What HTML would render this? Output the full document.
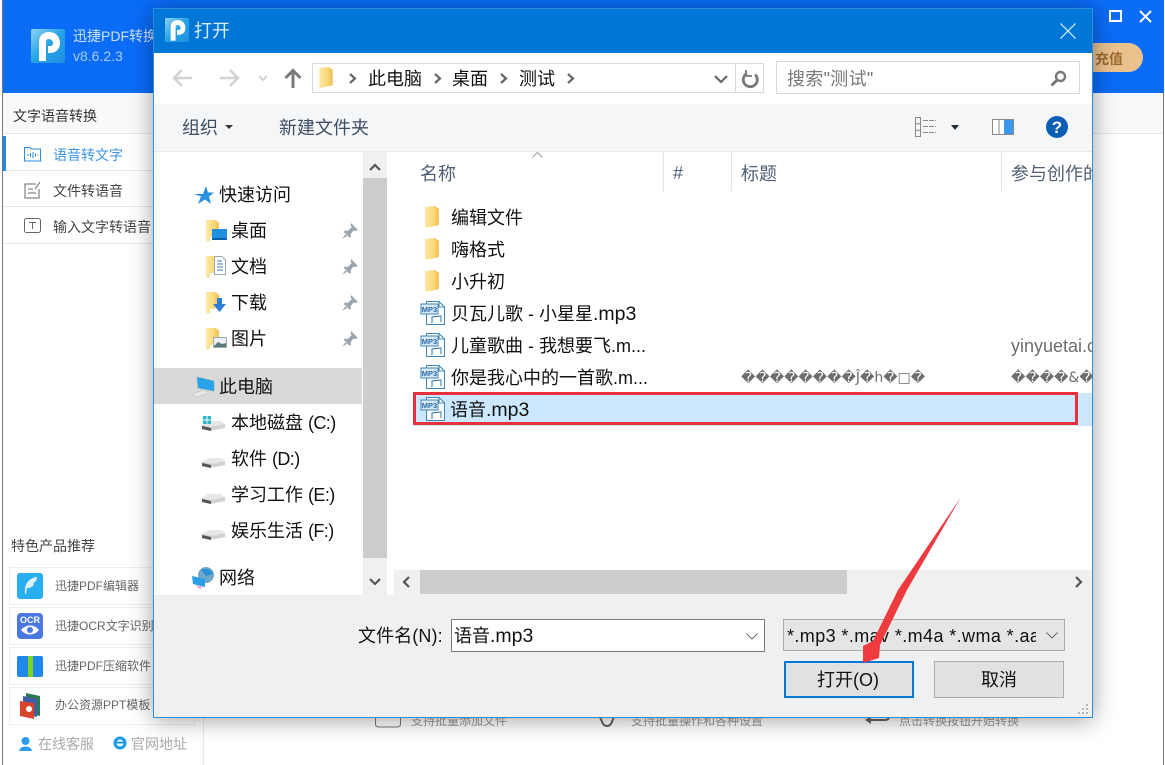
<!DOCTYPE html>
<html lang="zh"><head><meta charset="utf-8"><title>打开</title>
<style>
html,body{margin:0;padding:0;background:#fff}
body{width:1165px;height:765px;position:relative;overflow:hidden;font-family:"Liberation Sans","Noto Sans CJK SC",sans-serif;color:#111}
.a{position:absolute;box-sizing:border-box}
.t{position:absolute;white-space:nowrap;line-height:24px;height:24px;font-size:18px;margin-top:1px}
.s{font-size:14px;color:#444;margin-top:0}
.c{font-size:12px;color:#666;margin-top:0}
.g{font-size:12px;color:#999;margin-top:0}
.m{font-size:19.5px}
.p{letter-spacing:-.6px}
svg{position:absolute;overflow:visible}
</style></head><body>
<svg width="0" height="0" style="position:absolute"><defs>
<linearGradient id="fg" x1="0" x2="1"><stop offset="0" stop-color="#fde9a8"/><stop offset=".6" stop-color="#fbd977"/><stop offset="1" stop-color="#eebf55"/></linearGradient>
<linearGradient id="lg" x1="0" y1="0" x2="1" y2="1"><stop offset="0" stop-color="#8fd2ee"/><stop offset=".5" stop-color="#24a4e8"/><stop offset="1" stop-color="#1f8fe0"/></linearGradient>
<symbol id="folder" viewBox="0 0 14 22"><path d="M0 1 L10 0 L14 3 V19 L1 22 L0 21Z" fill="url(#fg)"/><path d="M11 1 L14 3 V19 L11 20Z" fill="#f3c862"/></symbol>
<symbol id="qf" viewBox="0 0 14 22"><path d="M0 0 H10 L13 3 V16 L4 17 V21 L1 22 L0 21Z" fill="url(#fg)"/></symbol>
<symbol id="drive" viewBox="0 0 24 16"><path d="M0 9 L7 5 H18 L23 8 V12 L8 15 L0 13Z" fill="#cfd1d3"/><path d="M0 9 L9 11 L23 8 L18 5 H7Z" fill="#e6e7e8"/><path d="M0 10 L9 12 V15 L0 13Z" fill="#555"/></symbol>
<symbol id="pin" viewBox="0 0 16 16"><path d="M9 1 L15 7 L13 8 L11 7.500 L8.500 11 L9 13 L7.500 14 L2.500 9 L3.500 7.500 L6 8 L9.500 4.500 L8.500 3Z M4.500 10 L1 15 L6 12Z" fill="#9aa5ad"/></symbol>
</defs></svg>

<!-- background app -->
<div class="a" style="left:2px;top:0;width:1162px;height:93px;background:#0a6cf7"></div>
<div class="a" style="left:2px;top:0;width:1px;height:765px;background:#777"></div>
<div class="a" style="left:1163px;top:93px;width:1px;height:672px;background:#777"></div>
<div class="a" style="left:3px;top:93px;width:1160px;height:41px;background:#f8f9fb;border-bottom:1px solid #e8e8e8"></div>
<div class="a" style="left:3px;top:170px;width:150px;height:1px;background:#e8e8e8"></div>
<div class="a" style="left:3px;top:206px;width:150px;height:1px;background:#e8e8e8"></div>
<div class="a" style="left:3px;top:243px;width:150px;height:1px;background:#e8e8e8"></div>
<div class="a" style="left:3px;top:136px;width:3px;height:35px;background:#1e88e5"></div>
<div class="a" style="left:203px;top:717px;width:1px;height:48px;background:#e8e8e8"></div>

<svg style="left:31px;top:29px" width="34" height="34" viewBox="0 0 34 34"><rect width="34" height="34" rx="2" fill="url(#lg)"/><path d="M8 32 V13 C8 6 13 3 18 3 C25 3 29 8 29 14 C29 20 25 24 19 24 H17 V17 H19 C21 17 22 16 22 14 C22 12 20 10 18 10 C16 10 15 11 15 13 V32Z" fill="#fff"/></svg>
<div class="t s" style="left:73px;top:24px;color:#cfe3ff">迅捷PDF转换器</div>
<div class="t s" style="left:73px;top:44px;color:#a9cdf8">v8.6.2.3</div>
<div class="t s" style="left:13px;top:104px;color:#333">文字语音转换</div>
<svg style="left:24px;top:146px" width="17" height="16" viewBox="0 0 17 16" fill="none" stroke="#2a8fe0"><path d="M.5 1.500H6L7 3H16.500V15H.5Z"/><path d="M4 8V10M6.500 7V11M9 6V12M11.500 7.500V10.500M14 8.500V9.500"/></svg>
<div class="t s" style="left:53px;top:143px;color:#3b96e6">语音转文字</div>
<svg style="left:24px;top:181px" width="18" height="18" viewBox="0 0 18 18" fill="none" stroke="#666"><path d="M12 3H1V17H15V8M4 8H9M4 12H12M11 8L16 1"/></svg>
<div class="t s" style="left:53px;top:179px">文件转语音</div>
<svg style="left:24px;top:218px" width="17" height="15" viewBox="0 0 17 15" fill="none" stroke="#666"><rect x=".5" y=".5" width="16" height="14" rx="2"/><path d="M5 4.500H12M8.500 4.500V11"/></svg>
<div class="t s" style="left:53px;top:215px">输入文字转语音</div>
<div class="t s" style="left:11px;top:534px">特色产品推荐</div>

<div class="a" style="left:9px;top:567px;width:186px;height:38px;border:1px solid #eee"></div>
<div class="a" style="left:9px;top:607px;width:186px;height:38px;border:1px solid #eee"></div>
<div class="a" style="left:9px;top:647px;width:186px;height:38px;border:1px solid #eee"></div>
<div class="a" style="left:9px;top:687px;width:186px;height:38px;border:1px solid #eee"></div>
<svg style="left:17px;top:573px" width="26" height="26" viewBox="0 0 26 26"><rect width="26" height="26" rx="3" fill="#29aef0"/><path d="M8 21C7 12 11 5 20 4C20 8 18 9 16 10L17 11C15 15 12 15 10 15L9 21Z" fill="#dff3fd"/></svg>
<svg style="left:17px;top:613px" width="26" height="26" viewBox="0 0 26 26"><rect width="26" height="26" rx="4" fill="#4a78e0"/><text x="13" y="10" font-size="9" font-weight="700" text-anchor="middle" fill="#fff" font-family="Liberation Sans">OCR</text><path d="M4 17C9 11 17 11 22 17C17 23 9 23 4 17Z" fill="#fff"/><circle cx="13" cy="17" r="3" fill="#4a78e0"/></svg>
<svg style="left:17px;top:656px" width="26" height="21" viewBox="0 0 26 21"><rect width="26" height="21" rx="2" fill="#1f88ea"/><rect x="11" width="5" height="21" fill="#7ed321"/></svg>
<svg style="left:20px;top:693px" width="20" height="26" viewBox="0 0 20 26"><path d="M6 0L20 3V23L6 20Z" fill="#2c7a52"/><path d="M3 3L17 6V24L3 21Z" fill="#3f5ea8"/><path d="M0 8L14 10V26L0 23Z" fill="#d8452b"/><circle cx="9" cy="16" r="3" fill="#fff"/></svg>
<div class="t c" style="left:55px;top:574px">迅捷PDF编辑器</div>
<div class="t c" style="left:55px;top:614px">迅捷OCR文字识别</div>
<div class="t c" style="left:55px;top:654px">迅捷PDF压缩软件</div>
<div class="t c" style="left:55px;top:693px">办公资源PPT模板</div>
<svg style="left:18px;top:736px" width="15" height="15" viewBox="0 0 15 15"><circle cx="7.500" cy="5" r="4" fill="#2a9df0"/><path d="M1 15C2 9 13 9 14 15Z" fill="#2a9df0"/></svg>
<div class="t" style="left:38px;top:731px;font-size:14px;color:#aaa">在线客服</div>
<svg style="left:113px;top:736px" width="14" height="14" viewBox="0 0 14 14"><circle cx="7" cy="7" r="5" fill="none" stroke="#1e9be8" stroke-width="3"/><path d="M3 6.500H12" stroke="#1e9be8" stroke-width="2"/></svg>
<div class="t" style="left:131px;top:731px;font-size:14px;color:#aaa">官网地址</div>

<div class="t g" style="left:411px;top:709px">支持批量添加文件</div>
<div class="t g" style="left:631px;top:709px">支持批量操作和各种设置</div>
<div class="t g" style="left:899px;top:709px">点击转换按钮开始转换</div>
<svg style="left:375px;top:712px" width="26" height="16" viewBox="0 0 26 16" fill="none" stroke="#777"><rect x=".5" y="-6" width="25" height="21" rx="3"/></svg>
<svg style="left:593px;top:712px" width="28" height="16" viewBox="0 0 28 16" fill="none" stroke="#666" stroke-width="2"><path d="M0 5H6C9 5 8 14 14 14C20 14 19 5 22 5H28"/></svg>
<svg style="left:865px;top:712px" width="27" height="14" viewBox="0 0 27 14" fill="none" stroke="#666" stroke-width="2"><path d="M25 0C25 6 23 8 20 8H4"/><path d="M0 8L6 4V12Z" fill="#666" stroke="none"/></svg>

<div class="a" style="left:1093px;top:43px;width:50px;height:29px;background:#eac28e;border-radius:0 15px 15px 0"></div>
<div class="t" style="left:1095px;top:46px;font-size:14px;font-weight:700;color:#9c6a2e">充值</div>
<div class="a" style="left:1109px;top:10px;width:13px;height:12px;border:2px solid #fff"></div>
<svg style="left:1139px;top:10px" width="13" height="13" viewBox="0 0 13 13" stroke="#fff" stroke-width="2"><path d="M1 1L12 12M12 1L1 12"/></svg>

<!-- dialog -->
<div class="a" style="left:153px;top:8px;width:940px;height:710px;background:#fff;border:1px solid #2a8fe0;box-shadow:0 2px 22px rgba(0,0,0,.38);overflow:hidden"></div>
<div class="a" style="left:154px;top:9px;width:938px;height:44px;background:#0076d6"></div>
<svg style="left:165px;top:18px" width="24" height="24" viewBox="0 0 34 34"><rect width="34" height="34" rx="2" fill="url(#lg)"/><path d="M8 32 V13 C8 6 13 3 18 3 C25 3 29 8 29 14 C29 20 25 24 19 24 H17 V17 H19 C21 17 22 16 22 14 C22 12 20 10 18 10 C16 10 15 11 15 13 V32Z" fill="#fff"/></svg>
<div class="t" style="left:194px;top:18px;color:#dcecfa">打开</div>
<svg style="left:1060px;top:23px" width="16" height="16" viewBox="0 0 16 16" stroke="#e8f3fc" stroke-width="1.200"><path d="M.5 .5L15.500 15.500M15.500 .5L.5 15.500"/></svg>

<!-- nav toolbar -->
<svg style="left:172px;top:68px" width="22" height="20" viewBox="0 0 22 20" fill="none" stroke="#d2d2d2" stroke-width="2.500"><path d="M20 10H2M10 2L2 10L10 18"/></svg>
<svg style="left:218px;top:68px" width="22" height="20" viewBox="0 0 22 20" fill="none" stroke="#d2d2d2" stroke-width="2.500"><path d="M2 10H20M12 2L20 10L12 18"/></svg>
<svg style="left:258px;top:75px" width="10" height="6" viewBox="0 0 10 6" fill="none" stroke="#d5d5d5" stroke-width="2"><path d="M1 1L5 5L9 1"/></svg>
<svg style="left:284px;top:68px" width="18" height="20" viewBox="0 0 18 20" fill="none" stroke="#7a7a7a" stroke-width="3"><path d="M9 20V3M1.500 10L9 2.500L16.500 10"/></svg>
<div class="a" style="left:312px;top:63px;width:452px;height:30px;border:1px solid #d9d9d9"></div>
<div class="a" style="left:735px;top:63px;width:1px;height:30px;background:#d9d9d9"></div>
<svg style="left:319px;top:67px" width="14" height="21"><use href="#folder" width="14" height="21"/></svg>
<svg style="left:349px;top:73px" width="7" height="11" viewBox="0 0 7 11" fill="none" stroke="#666" stroke-width="2.200"><path d="M1 1L6 5.500L1 10"/></svg>
<div class="t" style="left:368px;top:66px">此电脑</div>
<svg style="left:434px;top:73px" width="7" height="11" viewBox="0 0 7 11" fill="none" stroke="#666" stroke-width="2.200"><path d="M1 1L6 5.500L1 10"/></svg>
<div class="t" style="left:452px;top:66px">桌面</div>
<svg style="left:500px;top:73px" width="7" height="11" viewBox="0 0 7 11" fill="none" stroke="#666" stroke-width="2.200"><path d="M1 1L6 5.500L1 10"/></svg>
<div class="t" style="left:519px;top:66px">测试</div>
<svg style="left:567px;top:73px" width="7" height="11" viewBox="0 0 7 11" fill="none" stroke="#666" stroke-width="2.200"><path d="M1 1L6 5.500L1 10"/></svg>
<svg style="left:714px;top:75px" width="14" height="9" viewBox="0 0 14 9" fill="none" stroke="#666" stroke-width="2.200"><path d="M1 1L7 7L13 1"/></svg>
<svg style="left:742px;top:70px" width="17" height="18" viewBox="0 0 17 18" fill="none" stroke="#7a7a7a" stroke-width="2.800"><path d="M5 3.500A7 7 0 1 0 13 4.500"/><path d="M4 0V6H10" stroke-width="1.800"/></svg>
<div class="a" style="left:776px;top:61px;width:304px;height:33px;border:1px solid #d9d9d9"></div>
<div class="t" style="left:787px;top:66px;color:#777;letter-spacing:.3px">搜索"测试"</div>
<svg style="left:1050px;top:70px" width="17" height="17" viewBox="0 0 17 17" fill="none" stroke="#777"><circle cx="10.500" cy="6.500" r="4.500" stroke-width="2.400"/><path d="M7 10L1.500 15.500" stroke-width="3"/></svg>

<!-- command bar -->
<div class="a" style="left:154px;top:104px;width:938px;height:48px;background:#f5f6f7;border-bottom:1px solid #e8e9ea"></div>
<div class="t" style="left:182px;top:115px;color:#3d4f64">组织</div>
<svg style="left:225px;top:125px" width="8" height="4" viewBox="0 0 8 4"><path d="M0 0H8L4 4Z" fill="#333"/></svg>
<div class="t" style="left:279px;top:115px;color:#3d4f64">新建文件夹</div>
<svg style="left:915px;top:117px" width="22" height="20" viewBox="0 0 22 20" fill="none" stroke="#8a8a8a"><rect x=".5" y=".5" width="5" height="19"/><path d="M.5 6.800H5.500M.5 13.200H5.500"/><path d="M8 3.500H21M8 9.500H21M8 15.500H21" stroke-dasharray="5 1"/></svg>
<svg style="left:951px;top:125px" width="8" height="5" viewBox="0 0 8 5"><path d="M0 0H8L4 5Z" fill="#1f2d3d"/></svg>
<svg style="left:992px;top:119px" width="22" height="16" viewBox="0 0 22 16"><rect x=".5" y=".5" width="21" height="15" fill="#fff" stroke="#8a8a8a"/><rect x="12" y="1" width="9" height="14" fill="#3a98ec"/><path d="M7 1V15" stroke="#8a8a8a"/></svg>
<svg style="left:1046px;top:116px" width="22" height="22" viewBox="0 0 22 22"><circle cx="11" cy="11" r="11" fill="#0a5fb4"/><text x="11" y="17" font-size="17" font-weight="700" text-anchor="middle" fill="#fff" font-family="Liberation Sans">?</text></svg>

<!-- left nav -->
<div class="a" style="left:154px;top:368px;width:208px;height:36px;background:#d9d9d9"></div>
<svg style="left:194px;top:186px" width="20" height="19" viewBox="0 0 20 19"><path d="M12 0L14 6.500H20L15 10.500L17 18L11 13.500L4 18L7 10.500L0 8H9Z" fill="#2b90e0"/></svg>
<div class="t" style="left:219px;top:182px">快速访问</div>
<svg style="left:206px;top:220px" width="14" height="22"><use href="#qf" width="14" height="22"/></svg>
<svg style="left:212px;top:229px" width="15" height="11" viewBox="0 0 15 11"><rect width="15" height="11" fill="#1f8fe0"/><rect y="9" width="15" height="2" fill="#0c5ea8"/></svg>
<div class="t" style="left:231px;top:218px">桌面</div>
<svg style="left:206px;top:256px" width="14" height="22"><use href="#qf" width="14" height="22"/></svg>
<svg style="left:214px;top:256px" width="12" height="19" viewBox="0 0 12 19" fill="#fff" stroke="#9aa"><path d="M.5 .5H8L11.500 4V18.500H.5Z"/><path d="M3 5H8M3 8H9M3 11H9M3 14H9" stroke="#3b7fbd"/></svg>
<div class="t" style="left:231px;top:254px">文档</div>
<svg style="left:206px;top:292px" width="14" height="22"><use href="#qf" width="14" height="22"/></svg>
<svg style="left:213px;top:298px" width="13" height="14" viewBox="0 0 13 14"><path d="M4 0H9V6H13L6.500 14L0 6H4Z" fill="#2c7fd6"/></svg>
<div class="t" style="left:231px;top:290px">下载</div>
<svg style="left:206px;top:328px" width="14" height="22"><use href="#qf" width="14" height="22"/></svg>
<svg style="left:213px;top:337px" width="14" height="11" viewBox="0 0 14 11"><rect x=".5" y=".5" width="13" height="10" fill="#eef" stroke="#9aa"/><path d="M1 9L5 5L9 7L13 6V10H1Z" fill="#5b7a7a"/></svg>
<div class="t" style="left:231px;top:326px">图片</div>
<svg style="left:341px;top:222px" width="18" height="18"><use href="#pin" width="18" height="18"/></svg>
<svg style="left:341px;top:258px" width="18" height="18"><use href="#pin" width="18" height="18"/></svg>
<svg style="left:341px;top:294px" width="18" height="18"><use href="#pin" width="18" height="18"/></svg>
<svg style="left:341px;top:330px" width="18" height="18"><use href="#pin" width="18" height="18"/></svg>
<svg style="left:191px;top:376px" width="24" height="21" viewBox="0 0 24 21"><path d="M6 1L23 5V15L7 12Z" fill="#2aa3ea" stroke="#7ab" stroke-width=".6"/><path d="M1 18L13 14L18 17L6 21Z" fill="#e8e8e8" stroke="#bbb" stroke-width=".5"/></svg>
<div class="t" style="left:219px;top:374px">此电脑</div>
<svg style="left:202px;top:416px" width="24" height="16"><use href="#drive" width="24" height="16"/></svg>
<svg style="left:203px;top:416px" width="8" height="8" viewBox="0 0 8 8" fill="#28b8c8"><rect width="3.500" height="3.500"/><rect x="4.500" width="3.500" height="3.500"/><rect y="4.500" width="3.500" height="3.500"/><rect x="4.500" y="4.500" width="3.500" height="3.500"/></svg>
<div class="t" style="left:231px;top:410px">本地磁盘 <span class="p">(C:)</span></div>
<svg style="left:202px;top:453px" width="24" height="16"><use href="#drive" width="24" height="16"/></svg>
<div class="t" style="left:231px;top:446px">软件 <span class="p">(D:)</span></div>
<svg style="left:202px;top:489px" width="24" height="16"><use href="#drive" width="24" height="16"/></svg>
<div class="t" style="left:231px;top:482px">学习工作 <span class="p">(E:)</span></div>
<svg style="left:202px;top:525px" width="24" height="16"><use href="#drive" width="24" height="16"/></svg>
<div class="t" style="left:231px;top:518px">娱乐生活 <span class="p">(F:)</span></div>
<svg style="left:191px;top:566px" width="24" height="23" viewBox="0 0 24 23"><circle cx="15" cy="9" r="8" fill="#6fa8c8"/><path d="M10 4C14 1 20 4 22 8L15 10Z" fill="#2a90d8"/><path d="M1 10L14 13V21L2 18Z" fill="#2a9ee6"/><path d="M4 19L12 21L9 23Z" fill="#e8a0c0"/></svg>
<div class="t" style="left:219px;top:565px">网络</div>

<!-- nav scrollbar -->
<div class="a" style="left:363px;top:152px;width:24px;height:443px;background:#f0f0f0"></div>
<div class="a" style="left:363px;top:178px;width:24px;height:380px;background:#cdcdcd"></div>
<svg style="left:369px;top:163px" width="12" height="8" viewBox="0 0 12 8" fill="none" stroke="#555" stroke-width="2.200"><path d="M1 7L6 2L11 7"/></svg>
<svg style="left:369px;top:578px" width="12" height="8" viewBox="0 0 12 8" fill="none" stroke="#555" stroke-width="2.200"><path d="M1 1L6 6L11 1"/></svg>

<!-- headers -->
<div class="t" style="left:420px;top:161px;color:#4f6076">名称</div>
<svg style="left:532px;top:152px" width="11" height="6" viewBox="0 0 11 6" fill="none" stroke="#999"><path d="M.5 5.500L5.500 .5L10.500 5.500"/></svg>
<div class="a" style="left:663px;top:152px;width:1px;height:39px;background:#e5e5e5"></div>
<div class="t" style="left:673px;top:160px;color:#4f6076">#</div>
<div class="a" style="left:731px;top:152px;width:1px;height:39px;background:#e5e5e5"></div>
<div class="t" style="left:741px;top:161px;color:#4f6076">标题</div>
<div class="a" style="left:1001px;top:152px;width:1px;height:39px;background:#e5e5e5"></div>
<div class="a" style="left:1011px;top:161px;width:81px;height:26px;overflow:hidden"><div class="t" style="left:0;top:0;color:#4f6076">参与创作的艺术家</div></div>

<!-- files -->
<div class="a" style="left:414px;top:393px;width:678px;height:33px;background:#cce8ff"></div>
<svg style="left:425px;top:206px" width="14" height="22"><use href="#folder" width="14" height="22"/></svg>
<svg style="left:425px;top:238px" width="14" height="22"><use href="#folder" width="14" height="22"/></svg>
<svg style="left:425px;top:270px" width="14" height="22"><use href="#folder" width="14" height="22"/></svg>
<div class="t" style="left:451px;top:205px">编辑文件</div>
<div class="t" style="left:451px;top:237px">嗨格式</div>
<div class="t" style="left:451px;top:269px">小升初</div>

<svg style="left:421px;top:301px" width="24" height="24" viewBox="0 0 24 24"><path d="M5.500 .5H18L23.500 6V23.500H5.500Z" fill="#fff" stroke="#3f86b8"/><path d="M18 .5V6H23.500" fill="none" stroke="#3f86b8"/><rect x="0" y="3" width="17" height="10" fill="#d8e8f4" stroke="#3f86b8"/><text x="8.500" y="11" font-size="7.500" font-weight="700" text-anchor="middle" fill="#2a6ea8" font-family="Liberation Sans">MP3</text><path d="M11 22V16L20 15V21" fill="none" stroke="#2a6ea8"/></svg>
<svg style="left:421px;top:333px" width="24" height="24" viewBox="0 0 24 24"><path d="M5.500 .5H18L23.500 6V23.500H5.500Z" fill="#fff" stroke="#3f86b8"/><path d="M18 .5V6H23.500" fill="none" stroke="#3f86b8"/><rect x="0" y="3" width="17" height="10" fill="#d8e8f4" stroke="#3f86b8"/><text x="8.500" y="11" font-size="7.500" font-weight="700" text-anchor="middle" fill="#2a6ea8" font-family="Liberation Sans">MP3</text><path d="M11 22V16L20 15V21" fill="none" stroke="#2a6ea8"/></svg>
<svg style="left:421px;top:365px" width="24" height="24" viewBox="0 0 24 24"><path d="M5.500 .5H18L23.500 6V23.500H5.500Z" fill="#fff" stroke="#3f86b8"/><path d="M18 .5V6H23.500" fill="none" stroke="#3f86b8"/><rect x="0" y="3" width="17" height="10" fill="#d8e8f4" stroke="#3f86b8"/><text x="8.500" y="11" font-size="7.500" font-weight="700" text-anchor="middle" fill="#2a6ea8" font-family="Liberation Sans">MP3</text><path d="M11 22V16L20 15V21" fill="none" stroke="#2a6ea8"/></svg>
<svg style="left:421px;top:397px" width="24" height="24" viewBox="0 0 24 24"><path d="M5.500 .5H18L23.500 6V23.500H5.500Z" fill="#fff" stroke="#3f86b8"/><path d="M18 .5V6H23.500" fill="none" stroke="#3f86b8"/><rect x="0" y="3" width="17" height="10" fill="#d8e8f4" stroke="#3f86b8"/><text x="8.500" y="11" font-size="7.500" font-weight="700" text-anchor="middle" fill="#2a6ea8" font-family="Liberation Sans">MP3</text><path d="M11 22V16L20 15V21" fill="none" stroke="#2a6ea8"/></svg>
<div class="t" style="left:451px;top:301px">贝瓦儿歌 - 小星星<span class="m">.mp3</span></div>
<div class="t" style="left:451px;top:333px">儿童歌曲 - 我想要飞.m...</div>
<div class="t" style="left:451px;top:365px">你是我心中的一首歌.m...</div>
<div class="t" style="left:450px;top:397px">语音<span class="m">.mp3</span></div>
<div class="a" style="left:1011px;top:333px;width:81px;height:26px;overflow:hidden"><div class="t" style="left:0;top:0;color:#6d6d6d">yinyuetai.com</div></div>
<div class="t" style="left:741px;top:365px;font-size:14px;color:#6d6d6d;font-family:'DejaVu Sans','Noto Sans CJK SC',sans-serif">��������Ĵ�h�□�</div>
<div class="a" style="left:1011px;top:365px;width:81px;height:26px;overflow:hidden"><div class="t" style="left:0;top:0;font-size:14px;color:#6d6d6d;font-family:'DejaVu Sans','Noto Sans CJK SC',sans-serif">����&amp;����</div></div>
<div class="a" style="left:413px;top:392px;width:665px;height:33px;border:3px solid #e8303c"></div>

<!-- h scrollbar and bottom -->
<div class="a" style="left:394px;top:570px;width:698px;height:25px;background:#f0f0f0"></div>
<div class="a" style="left:420px;top:570px;width:427px;height:24px;background:#cdcdcd"></div>
<svg style="left:402px;top:576px" width="9" height="12" viewBox="0 0 9 12" fill="none" stroke="#555" stroke-width="2.200"><path d="M7 1L2 6L7 11"/></svg>
<svg style="left:1074px;top:576px" width="9" height="12" viewBox="0 0 9 12" fill="none" stroke="#555" stroke-width="2.200"><path d="M2 1L7 6L2 11"/></svg>
<div class="a" style="left:154px;top:595px;width:938px;height:122px;background:#f0f0f0"></div>
<div class="t" style="left:358px;top:623px;letter-spacing:.1px">文件名(N):</div>
<div class="a" style="left:451px;top:619px;width:314px;height:33px;background:#fff;border:1px solid #7a7a7a"></div>
<div class="t" style="left:454px;top:623px">语音<span class="m">.mp3</span></div>
<svg style="left:746px;top:633px" width="12" height="7" viewBox="0 0 12 7" fill="none" stroke="#666"><path d="M.5 .5L6 6L11.500 .5"/></svg>
<div class="a" style="left:783px;top:619px;width:282px;height:32px;background:#e5e5e5;border:1px solid #adadad"></div>
<div class="a" style="left:787px;top:623px;width:249px;height:26px;overflow:hidden"><div class="t" style="left:0;top:0;letter-spacing:.4px">*.mp3 *.mav *.m4a *.wma *.aac</div></div>
<svg style="left:1046px;top:632px" width="12" height="7" viewBox="0 0 12 7" fill="none" stroke="#666"><path d="M.5 .5L6 6L11.500 .5"/></svg>
<div class="a" style="left:784px;top:661px;width:130px;height:37px;background:#e1e1e1;border:2px solid #0078d7"></div>
<div class="t" style="left:817px;top:667px">打开(O)</div>
<div class="a" style="left:934px;top:661px;width:130px;height:37px;background:#e1e1e1;border:1px solid #adadad"></div>
<div class="t" style="left:981px;top:667px">取消</div>
<svg style="left:1078px;top:704px" width="12" height="12" viewBox="0 0 12 12" fill="#b5b5b5"><rect x="8" y="0" width="2" height="2"/><rect x="4" y="4" width="2" height="2"/><rect x="8" y="4" width="2" height="2"/><rect x="0" y="8" width="2" height="2"/><rect x="4" y="8" width="2" height="2"/><rect x="8" y="8" width="2" height="2"/></svg>

<!-- red arrow -->
<svg style="left:0;top:0" width="1165" height="765" viewBox="0 0 1165 765"><path d="M961 497L907 590L880 645L879 658L863 663L863 646L873 641L898 590Z" fill="#ee3b3f"/></svg>
</body></html>
